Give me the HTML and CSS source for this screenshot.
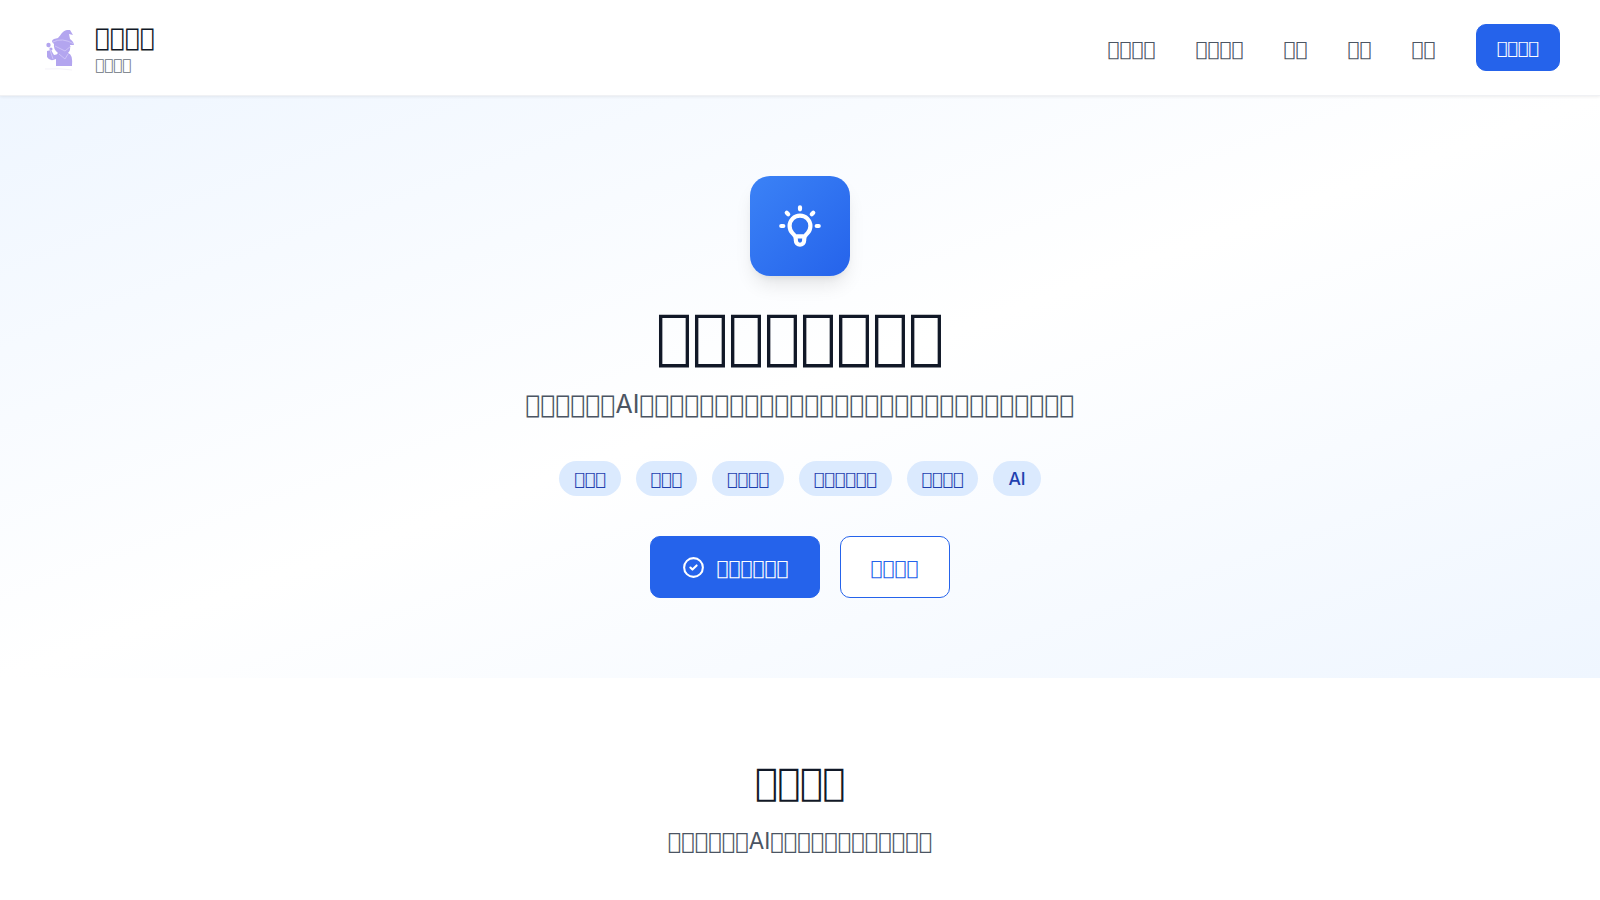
FILE: index.html
```
<!DOCTYPE html>
<html lang="zh">
<head>
<meta charset="utf-8">
<title>AI</title>
<link rel="stylesheet" href="styles.css">
</head>
<body>
<header class="header">
  <div class="brand">
    <svg class="logo" viewBox="0 0 50 50">
      <g fill="#b3a5ef">
        <path d="M18 15C21 12 22 8 27 7L30 7L33 12L29 11L30 16Q34 19 34 22L30 22Q31 27 28 30Q33 31 32 43H16V36Q10 39 7 34L7 28L11 27L14 32Q17 32 18 30Q13 26 14 21Q10 18 14 16Z"/>
        <circle cx="8.5" cy="22" r="2.2"/>
        <circle cx="11" cy="26" r="1.5"/>
      </g>
      <path d="M13 19Q22 14 34 21M15 23L25 28L31 23M9 24L13 36M19 31L25 36L28 31" fill="none" stroke="#d8d0f9" stroke-width=".7"/>
      <path d="M5 46Q20 45 32 47" fill="none" stroke="#f5f3fa" stroke-width="1"/>
    </svg>
    <div>
      <div class="brand-name">&#xE0FF;&#xE0FF;&#xE0FF;&#xE0FF;</div>
      <div class="brand-sub">&#xE0FF;&#xE0FF;&#xE0FF;&#xE0FF;</div>
    </div>
  </div>
  <nav class="nav">
    <a class="nav-link">&#xE0FF;&#xE0FF;&#xE0FF;&#xE0FF;</a>
    <a class="nav-link">&#xE0FF;&#xE0FF;&#xE0FF;&#xE0FF;</a>
    <a class="nav-link">&#xE0FF;&#xE0FF;</a>
    <a class="nav-link">&#xE0FF;&#xE0FF;</a>
    <a class="nav-link">&#xE0FF;&#xE0FF;</a>
    <a class="nav-button">&#xE0FF;&#xE0FF;&#xE0FF;&#xE0FF;</a>
  </nav>
</header>
<main>
  <section class="hero">
    <div class="hero-icon">
      <svg viewBox="0 0 24 24" fill="none" stroke="#fff" stroke-width="2" stroke-linecap="round" stroke-linejoin="round"><path d="M9.663 17h4.673M12 3v1m6.364 1.636l-.707.707M21 12h-1M4 12H3m3.343-5.657l-.707-.707m2.828 9.9a5 5 0 117.072 0l-.548.547A3.374 3.374 0 0014 18.469V19a2 2 0 11-4 0v-.531c0-.895-.356-1.754-.988-2.386l-.548-.547z"/></svg>
    </div>
    <h1 class="hero-title">&#xE0FF;&#xE0FF;&#xE0FF;&#xE0FF;&#xE0FF;&#xE0FF;&#xE0FF;&#xE0FF;</h1>
    <p class="hero-text">&#xE0FF;&#xE0FF;&#xE0FF;&#xE0FF;&#xE0FF;&#xE0FF;<span class="latin">AI</span>&#xE0FF;&#xE0FF;&#xE0FF;&#xE0FF;&#xE0FF;&#xE0FF;&#xE0FF;&#xE0FF;&#xE0FF;&#xE0FF;&#xE0FF;&#xE0FF;&#xE0FF;&#xE0FF;&#xE0FF;&#xE0FF;&#xE0FF;&#xE0FF;&#xE0FF;&#xE0FF;&#xE0FF;&#xE0FF;&#xE0FF;&#xE0FF;&#xE0FF;&#xE0FF;&#xE0FF;&#xE0FF;&#xE0FF;</p>
    <div class="tags">
      <span class="tag">&#xE0FF;&#xE0FF;&#xE0FF;</span>
      <span class="tag">&#xE0FF;&#xE0FF;&#xE0FF;</span>
      <span class="tag">&#xE0FF;&#xE0FF;&#xE0FF;&#xE0FF;</span>
      <span class="tag">&#xE0FF;&#xE0FF;&#xE0FF;&#xE0FF;&#xE0FF;&#xE0FF;</span>
      <span class="tag">&#xE0FF;&#xE0FF;&#xE0FF;&#xE0FF;</span>
      <span class="tag latin">AI</span>
    </div>
    <div class="actions">
      <a class="button button-primary">
        <svg viewBox="0 0 24 24" fill="none" stroke="currentColor" stroke-width="2" stroke-linecap="round" stroke-linejoin="round"><path d="M9 12l2 2 4-4m6 2a9 9 0 11-18 0 9 9 0 0118 0z"/></svg>
        <span class="button-label">&#xE0FF;&#xE0FF;&#xE0FF;&#xE0FF;&#xE0FF;&#xE0FF;</span>
      </a>
      <a class="button button-outline"><span class="button-label">&#xE0FF;&#xE0FF;&#xE0FF;&#xE0FF;</span></a>
    </div>
  </section>
  <section class="features">
    <h2 class="features-title">&#xE0FF;&#xE0FF;&#xE0FF;&#xE0FF;</h2>
    <p class="features-text">&#xE0FF;&#xE0FF;&#xE0FF;&#xE0FF;&#xE0FF;&#xE0FF;<span class="latin">AI</span>&#xE0FF;&#xE0FF;&#xE0FF;&#xE0FF;&#xE0FF;&#xE0FF;&#xE0FF;&#xE0FF;&#xE0FF;&#xE0FF;&#xE0FF;&#xE0FF;</p>
  </section>
</main>
</body>
</html>
```
FILE: styles.css
```
* { box-sizing: border-box; }
html { font-size: 20px; }
body {
  margin: 0;
  height: 900px;
  overflow: hidden;
  background: #fff;
  color: #111827;
  font-family: "DejaVu Sans", sans-serif;
  line-height: 1.5;
}
h1, h2, p { margin: 0; }
.latin { font-family: Inter, sans-serif; }
.header {
  position: relative;
  display: flex;
  align-items: center;
  justify-content: space-between;
  height: 96px;
  padding: 0 40px;
  background: #fff;
  border-bottom: 1px solid #f0f1f4;
  box-shadow: 0 1px 3px rgba(0, 0, 0, .07);
}
.brand { display: flex; align-items: center; gap: 5px; }
.logo { width: 50px; height: 50px; }
.brand-name { padding-top: 1px; font-size: 25px; line-height: 34px; }
.brand-sub { font-size: 15px; line-height: 20px; color: #6b7280; }
.nav { display: flex; align-items: center; gap: 40px; color: #4b5563; }
.nav-link { padding-top: 2px; }
.nav-button {
  padding: 11px 20.2px 9px;
  border: 1px solid #2563eb;
  border-radius: 10px;
  background: #2563eb;
  color: #fff;
  font-size: 17.5px;
  line-height: 25px;
}
.hero {
  display: flex;
  flex-direction: column;
  align-items: center;
  height: 582px;
  padding-top: 80px;
  background: linear-gradient(to bottom right, #eff6ff, #fff 50%, #eff6ff);
}
.hero-icon {
  display: flex;
  align-items: center;
  justify-content: center;
  width: 100px;
  height: 100px;
  margin-bottom: 30px;
  border-radius: 20px;
  background: linear-gradient(to bottom right, #3b82f6, #2563eb);
  box-shadow: 0 12px 19px -4px rgba(0, 0, 0, .1), 0 5px 8px -5px rgba(0, 0, 0, .1);
}
.hero-icon svg { width: 50px; height: 50px; }
.hero-title { font-size: 60px; line-height: 60px; font-weight: 400; margin-bottom: 21px; }
.hero-text { font-size: 25px; line-height: 35px; color: #4b5563; margin-bottom: 39px; white-space: nowrap; }
.tags { display: flex; gap: 15px; margin-bottom: 40px; }
.tag {
  padding: 6px 14.9px 4px;
  border-radius: 18px;
  background: #dbeafe;
  color: #1e40af;
  font-size: 17.5px;
  line-height: 25px;
}
.tag.latin { padding: 5px 15px; font-weight: 500; }
.actions { display: flex; gap: 20px; }
.button {
  display: flex;
  align-items: center;
  gap: 10px;
  height: 62px;
  padding: 0 30px;
  border: 1.25px solid #2563eb;
  border-radius: 10px;
}
.button svg { width: 25px; height: 25px; }
.button-label { padding-top: 2px; }
.button-primary { background: #2563eb; color: #fff; }
.button-outline { background: #fff; color: #2563eb; }
.features { padding-top: 82px; text-align: center; }
.features-title { font-size: 37.5px; line-height: 45px; font-weight: 400; margin-bottom: 18px; }
.features-text { font-size: 22.5px; line-height: 35px; color: #4b5563; }
```
